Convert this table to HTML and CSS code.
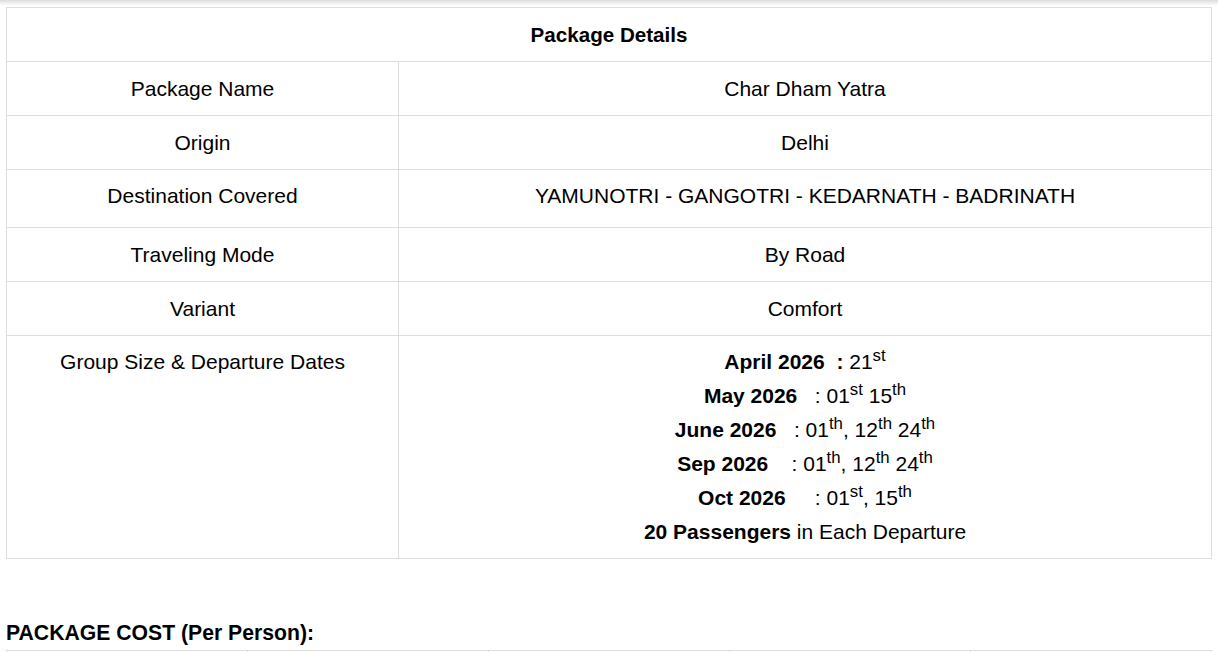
FILE: index.html
```html
<!DOCTYPE html>
<html>
<head>
<meta charset="utf-8">
<link rel="stylesheet" href="styles.css">
</head>
<body>
<div class="topshade"></div>
<div class="page">
  <table class="details">
    <tr><th colspan="2">Package Details</th></tr>
    <tr><td class="label">Package Name</td><td>Char Dham Yatra</td></tr>
    <tr><td class="label">Origin</td><td>Delhi</td></tr>
    <tr class="tall"><td class="label">Destination Covered</td><td>YAMUNOTRI - GANGOTRI - KEDARNATH - BADRINATH</td></tr>
    <tr><td class="label">Traveling Mode</td><td>By Road</td></tr>
    <tr><td class="label">Variant</td><td>Comfort</td></tr>
    <tr class="dates">
      <td class="label top">Group Size &amp; Departure Dates</td>
      <td>
        <div><b>April 2026&nbsp; :</b> 21<sup>st</sup></div>
        <div><b>May 2026</b> &nbsp; : 01<sup>st</sup> 15<sup>th</sup></div>
        <div><b>June 2026</b> &nbsp; : 01<sup>th</sup>, 12<sup>th</sup> 24<sup>th</sup></div>
        <div><b>Sep 2026</b> &nbsp; &nbsp;: 01<sup>th</sup>, 12<sup>th</sup> 24<sup>th</sup></div>
        <div><b>Oct 2026</b> &nbsp; &nbsp; : 01<sup>st</sup>, 15<sup>th</sup></div>
        <div><b>20 Passengers</b> in Each Departure</div>
      </td>
    </tr>
  </table>

  <h3 class="cost-title">PACKAGE COST (Per Person):</h3>

  <table class="cost">
    <tr><td></td><td></td><td></td><td></td><td></td></tr>
  </table>
</div>
</body>
</html>
```

FILE: styles.css
```css
html, body {
  margin: 0;
  padding: 0;
  background: #ffffff;
}
body {
  font-family: "Liberation Sans", Arial, sans-serif;
  font-size: 21px;
  color: #000;
}
.topshade {
  height: 6px;
  background: linear-gradient(#dcdcdc, #f6f6f6 70%, #ffffff);
}
.page {
  padding: 1px 6px 0 6px;
}
table {
  border-collapse: collapse;
  width: 100%;
}
.details th,
.details td {
  border: 1px solid #dedede;
  text-align: center;
  padding: 15px 10px;
  line-height: 23px;
  vertical-align: middle;
}
.details th {
  font-weight: bold;
  font-size: 20.6px;
}
.details td.label {
  width: 371px;
}
.details tr.tall td {
  padding-top: 14px;
  padding-bottom: 20px;
}
.details tr.dates td {
  padding-top: 9px;
  padding-bottom: 9px;
  line-height: 34px;
}
.details td.top {
  vertical-align: top;
}
.details sup {
  font-size: 0.8em;
  line-height: 0;
}
.cost-title {
  margin: 62px 0 5px 0;
  font-size: 21.2px;
  line-height: 24px;
  font-weight: bold;
}
.cost {
  table-layout: fixed;
}
.cost td {
  border: 1px solid #dedede;
  height: 40px;
}
```
